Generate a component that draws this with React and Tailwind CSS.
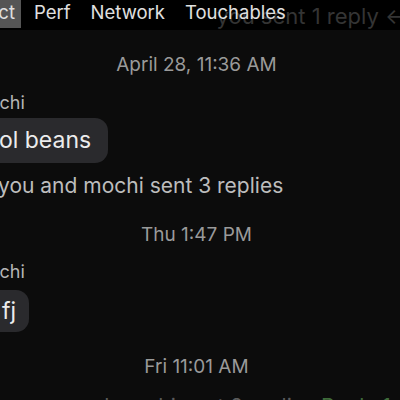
import React from "react";

export default function App() {
  const font = { fontFamily: "Inter, 'Noto Sans', sans-serif" };
  return (
    <div
      className="relative w-[400px] h-[400px] overflow-hidden bg-[#0c0c0c] text-white"
      style={font}
    >
      {/* header behind inspector */}
      <div className="h-[30px] bg-black flex items-center justify-end overflow-hidden">
        <span className="text-[22px] leading-none text-[#343434] whitespace-nowrap mr-[-6px] mt-[2px]">
          you sent 1 reply ←
        </span>
      </div>

      {/* inspector tab bar overlay */}
      <div className="absolute top-0 left-0 flex items-stretch h-[28px] text-[18.5px] leading-none text-[#e0e0e0]">
        <div className="w-[21px] overflow-hidden flex justify-end items-center bg-[#555555] pr-[6px] pb-[3px]">
          <span className="whitespace-nowrap shrink-0">Inspect</span>
        </div>
        <div className="flex items-center pl-[13px] pr-[10px] pb-[3px]">Perf</div>
        <div className="flex items-center px-[10px] pb-[3px]">Network</div>
        <div className="flex items-center px-[10px] pb-[3px]">Touchables</div>
      </div>

      {/* chat content */}
      <div className="flex flex-col">
        <div className="pt-[24px] text-center text-[19px] leading-[22px] text-[#9a9a9a] pr-[7px]">
          April 28, 11:36 AM
        </div>
        <div className="mt-[16px] ml-[-27px] text-[18px] leading-[22px] text-[#b5b5b5]">mochi</div>
        <div className="mt-[4px] ml-[-44px] self-start rounded-[13px] bg-[#2a2a2d] pl-[16px] pr-[17px] h-[45px] flex items-center text-[23px] text-[#ececec]">
          cool beans
        </div>
        <div className="mt-[10px] ml-[-2px] text-[21px] leading-[26px] text-[#bdbdbd] whitespace-nowrap">
          you and mochi sent 3 replies
        </div>
        <div className="mt-[25px] text-center text-[19px] leading-[22px] text-[#9a9a9a] pr-[7px]">
          Thu 1:47 PM
        </div>
        <div className="mt-[15px] ml-[-27px] text-[18px] leading-[22px] text-[#b5b5b5]">mochi</div>
        <div className="mt-[7px] ml-[-12px] self-start rounded-[13px] bg-[#2a2a2d] pl-[14px] pr-[13px] h-[42px] flex items-center text-[23px] text-[#ececec]">
          fj
        </div>
        <div className="mt-[24px] text-center text-[19px] leading-[22px] text-[#9a9a9a] pr-[7px]">
          Fri 11:01 AM
        </div>
        <div className="mt-[16px] ml-[30px] text-[21px] leading-[26px] text-[#5a5a5a] whitespace-nowrap">
          you and mochi sent 2 replies <span className="text-[#3f6b3a]">Reply 1</span>
        </div>
      </div>
    </div>
  );
}
